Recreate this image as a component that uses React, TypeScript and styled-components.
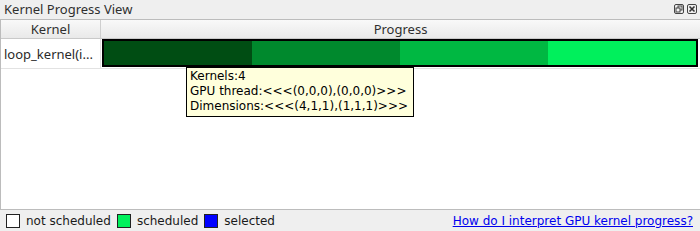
import React from "react";
import styled, { createGlobalStyle } from "styled-components";

const GlobalStyle = createGlobalStyle`
  html, body {
    margin: 0;
    padding: 0;
    background: #efefef;
  }
`;

const segments = ["#004d13", "#00892d", "#00b842", "#00f05c"];

const legend = [
  { label: "not scheduled", color: "#ffffff" },
  { label: "scheduled", color: "#00f05c" },
  { label: "selected", color: "#0000ff" },
];

const App: React.FC = () => {
  return (
    <>
      <GlobalStyle />
      <Window>
        <TitleBar>
          <Title>Kernel Progress View</Title>
          <TitleButtons>
            <TitleButton aria-label="float">
              <svg width="10" height="10" viewBox="0 0 10 10">
                <rect x="0.5" y="0.5" width="9" height="9" rx="1.5" fill="none" stroke="#444" />
                <rect x="4" y="2" width="4" height="4" fill="none" stroke="#444" />
                <rect x="2" y="4" width="4" height="4" fill="#f4f4f4" stroke="#444" />
              </svg>
            </TitleButton>
            <TitleButton aria-label="close">
              <svg width="10" height="10" viewBox="0 0 10 10">
                <rect x="0.5" y="0.5" width="9" height="9" rx="1.5" fill="none" stroke="#444" />
                <path d="M2.5 2.5 L7.5 7.5 M7.5 2.5 L2.5 7.5" stroke="#333" strokeWidth="1.6" />
              </svg>
            </TitleButton>
          </TitleButtons>
        </TitleBar>

        <Table>
          <HeaderRow>
            <HeaderCell>Kernel</HeaderCell>
            <HeaderCell $last>Progress</HeaderCell>
          </HeaderRow>
          <Row>
            <NameCell>loop_kernel(i...</NameCell>
            <BarCell>
              <Bar>
                {segments.map((c) => (
                  <Segment key={c} $color={c} />
                ))}
              </Bar>
            </BarCell>
          </Row>
          <Tooltip>
            <div>Kernels:4</div>
            <div>GPU thread:&lt;&lt;&lt;(0,0,0),(0,0,0)&gt;&gt;&gt;</div>
            <div>Dimensions:&lt;&lt;&lt;(4,1,1),(1,1,1)&gt;&gt;&gt;</div>
          </Tooltip>
        </Table>

        <Legend>
          <LegendItems>
            {legend.map((l) => (
              <LegendItem key={l.label}>
                <Swatch $color={l.color} />
                {l.label}
              </LegendItem>
            ))}
          </LegendItems>
          <HelpLink href="#">How do I interpret GPU kernel progress?</HelpLink>
        </Legend>
      </Window>
    </>
  );
};

export default App;

const Window = styled.div`
  width: 700px;
  height: 231px;
  display: flex;
  flex-direction: column;
  background: #efefef;
  font-family: "DejaVu Sans", sans-serif;
  overflow: hidden;
`;

const TitleBar = styled.div`
  height: 19px;
  display: flex;
  align-items: center;
  justify-content: space-between;
  padding: 0 3px 0 4px;
`;

const Title = styled.span`
  font-family: "Noto Sans", sans-serif;
  font-size: 13px;
  color: #2f2f2f;
  margin-top: -2px;
`;

const TitleButtons = styled.div`
  display: flex;
  gap: 3px;
  margin-top: -2px;
`;

const TitleButton = styled.span`
  display: flex;
  width: 10px;
  height: 10px;
`;

const Table = styled.div`
  position: relative;
  flex: 1;
  background: #ffffff;
  border: 1px solid #bcbcbc;
  border-right: none;
`;

const HeaderRow = styled.div`
  display: grid;
  grid-template-columns: 100px 1fr;
  height: 18px;
  border-bottom: 1px solid #c9c9c9;
  background: linear-gradient(#f9f9f9, #e9e9e9);
`;

const HeaderCell = styled.div<{ $last?: boolean }>`
  display: flex;
  align-items: center;
  justify-content: center;
  font-family: "Noto Sans", sans-serif;
  font-size: 13px;
  color: #2f2f2f;
  border-right: ${(p) => (p.$last ? "none" : "1px solid #cfcfcf")};
`;

const Row = styled.div`
  display: grid;
  grid-template-columns: 100px 1fr;
  height: 29px;
  border-bottom: 1px solid #e2e2e2;
`;

const NameCell = styled.div`
  display: flex;
  align-items: center;
  padding-left: 3px;
  font-family: "Noto Sans", sans-serif;
  font-size: 13px;
  color: #2a2a2a;
  border-right: 1px solid #e2e2e2;
`;

const BarCell = styled.div`
  padding: 0 2px 1px 1px;
  display: flex;
`;

const Bar = styled.div`
  flex: 1;
  display: flex;
  border: 2px solid #000;
`;

const Segment = styled.div<{ $color: string }>`
  flex: 1;
  background: ${(p) => p.$color};
`;

const Tooltip = styled.div`
  position: absolute;
  left: 185px;
  top: 47px;
  padding: 1px 5px 2px 3px;
  background: #ffffdc;
  border: 1px solid #000;
  font-size: 12px;
  line-height: 15px;
  color: #000;
`;

const Legend = styled.div`
  height: 21px;
  display: flex;
  align-items: center;
  justify-content: space-between;
  padding: 0 7px 0 6px;
  font-size: 12px;
  color: #1a1a1a;
`;

const LegendItems = styled.div`
  display: flex;
  gap: 6px;
`;

const LegendItem = styled.span`
  display: flex;
  align-items: center;
  gap: 6px;
`;

const Swatch = styled.span<{ $color: string }>`
  width: 12px;
  height: 12px;
  background: ${(p) => p.$color};
  border: 1px solid #222;
`;

const HelpLink = styled.a`
  color: #0000ee;
  text-decoration: underline;
`;
